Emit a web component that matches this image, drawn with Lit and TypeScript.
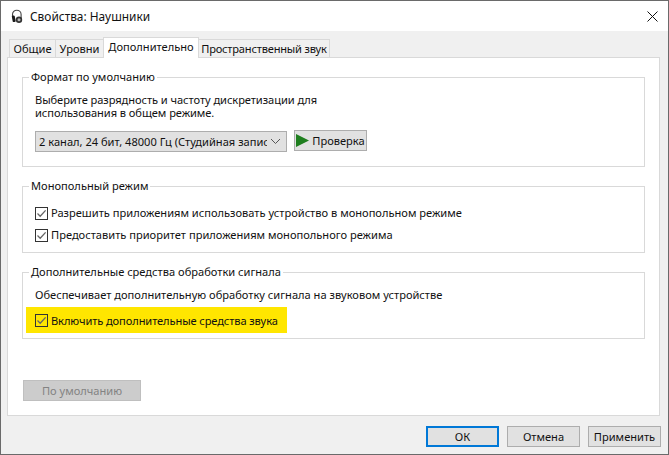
import { LitElement, html, css } from "lit";
import { customElement } from "lit/decorators.js";

const check = html`<svg class="cb" width="13" height="13" viewBox="0 0 13 13"><rect x=".5" y=".5" width="12" height="12" fill="none" stroke="#333"/><path d="M2.500 6.500 5.200 9.200 10.600 3.400" fill="none" stroke="#666" stroke-width="1.300"/></svg>`;

@customElement("app-root")
export class AppRoot extends LitElement {
  static styles = css`
    :host { display: block; width: 669px; height: 455px; font: 11.1px/16px "Noto Sans", sans-serif; color: #111; overflow: hidden; }
    * { box-sizing: border-box; }
    .window { height: 455px; width: 669px; border: 1px solid #6a6a6a; display: flex; flex-direction: column; background: #f0f0f0; }
    .title { height: 30px; background: #fff; display: flex; align-items: center; padding: 0 0 0 10px; gap: 7px; font-size: 11.9px; flex: none; }
    .close { margin-left: auto; margin-right: 10px; display: flex; }
    .body { flex: 1; padding: 7px 8px 0 6px; display: flex; flex-direction: column; }
    .tabs { display: flex; align-items: flex-end; height: 20px; padding-left: 2px; position: relative; z-index: 1; margin-bottom: -1px; white-space: nowrap; }
    .tab { height: 18px; border: 1px solid #d9d9d9; border-bottom: none; background: #f0f0f0; display: flex; align-items: center; justify-content: center; margin-left: -1px; margin-bottom: 1px; }
    .tab.on { height: 21px; background: #fff; margin-bottom: 0; padding-bottom: 2px; }
    .w1 { width: 47px; margin-left: 0; } .w2 { width: 49px; } .w3 { width: 96px; } .w4 { width: 132px; letter-spacing: -0.2px; }
    .panel { height: 359px; background: #fff; border: 1px solid #d9d9d9; padding: 11px 14px 0 14px; display: flex; flex-direction: column; }
    fieldset { margin: 0; padding: 0 0 0 12px; border: 1px solid #d9d9d9; min-width: 0; }
    legend { padding: 0 2px; margin-left: -6px; line-height: 16px; }
    .g1 { height: 98px; } .g2 { height: 75px; margin-top: 11px; } .g3 { height: 75px; margin-top: 11px; }
    .g1 p { margin: 8px 0 0; line-height: 13px; letter-spacing: -0.06px; }
    .controls { display: flex; gap: 7px; margin-top: 11px; align-items: flex-start; }
    .select { width: 252px; height: 21px; margin-top: 1px; background: #e1e1e1; border: 1px solid #adadad; display: flex; align-items: center; padding: 0 5px 0 3px; }
    .select span { width: 228px; overflow: hidden; white-space: nowrap; }
    .select svg { margin-left: auto; }
    .btn { background: #e1e1e1; border: 1px solid #adadad; height: 21px; display: flex; align-items: center; justify-content: center; font: inherit; color: inherit; padding: 0; }
    .test { width: 73px; gap: 3px; }
    .test svg { flex: none; }
    .row { display: flex; align-items: center; gap: 3px; height: 16px; white-space: nowrap; }
    .g2 .row { margin-top: 6px; } .g2 .row:first-of-type { margin-top: 11px; }
    .cb { flex: none; }
    .desc { margin: 7px 0 0; }
    .hl { background: #ffe600; margin: 4px 0 0 -9px; width: 261px; height: 26px; padding: 1px 0 0 9px; letter-spacing: -0.1px; }
    .def { width: 118px; margin: 41px 0 0 1px; background: #ccc; border-color: #bfbfbf; color: #838383; }
    .actions { display: flex; justify-content: flex-end; gap: 8px; margin: 10px -1px 0 0; }
    .actions .btn { width: 73px; }
    .ok { border: 2px solid #0078d7 !important; }
  `;

  render() {
    return html`<div class="window">
      <div class="title">
        <svg width="12" height="15" viewBox="0 0 12 15"><path d="M1.500 8V5.500a4.300 4.300 0 0 1 8.600 0V9" fill="none" stroke="#444" stroke-width="1.100"/><path d="M.8 7.200c.8-1 2.700-.8 3 .2l.9 4.600c.1 1-2.400 1.600-3 .6z" fill="#1a1a1a"/><circle cx="8" cy="10.800" r="3.200" fill="#333"/><circle cx="8" cy="10.800" r="1.500" fill="#bbb"/></svg>
        <span>Свойства: Наушники</span>
        <span class="close"><svg width="11" height="11" viewBox="0 0 11 11"><path d="M.5.5l10 10M10.500.5l-10 10" stroke="#111" fill="none"/></svg></span>
      </div>
      <div class="body">
        <div class="tabs">
          <div class="tab w1">Общие</div>
          <div class="tab w2">Уровни</div>
          <div class="tab on w3">Дополнительно</div>
          <div class="tab w4">Пространственный звук</div>
        </div>
        <div class="panel">
          <fieldset class="g1">
            <legend>Формат по умолчанию</legend>
            <p>Выберите разрядность и частоту дискретизации для<br />использования в общем режиме.</p>
            <div class="controls">
              <div class="select"><span>2 канал, 24 бит, 48000 Гц (Студийная записи</span>
                <svg width="11" height="7" viewBox="0 0 11 7"><path d="M1 1l4.500 4.500L10 1" fill="none" stroke="#555"/></svg></div>
              <button class="btn test"><svg width="13" height="13" viewBox="0 0 13 13"><path d="M0 0l13 6.500L0 13z" fill="#1f7f1f"/></svg>Проверка</button>
            </div>
          </fieldset>
          <fieldset class="g2">
            <legend>Монопольный режим</legend>
            <div class="row">${check}<span>Разрешить приложениям использовать устройство в монопольном режиме</span></div>
            <div class="row">${check}<span>Предоставить приоритет приложениям монопольного режима</span></div>
          </fieldset>
          <fieldset class="g3">
            <legend>Дополнительные средства обработки сигнала</legend>
            <p class="desc">Обеспечивает дополнительную обработку сигнала на звуковом устройстве</p>
            <div class="row hl">${check}<span>Включить дополнительные средства звука</span></div>
          </fieldset>
          <button class="btn def">По умолчанию</button>
        </div>
        <div class="actions">
          <button class="btn ok">ОК</button>
          <button class="btn">Отмена</button>
          <button class="btn">Применить</button>
        </div>
      </div>
    </div>`;
  }
}
